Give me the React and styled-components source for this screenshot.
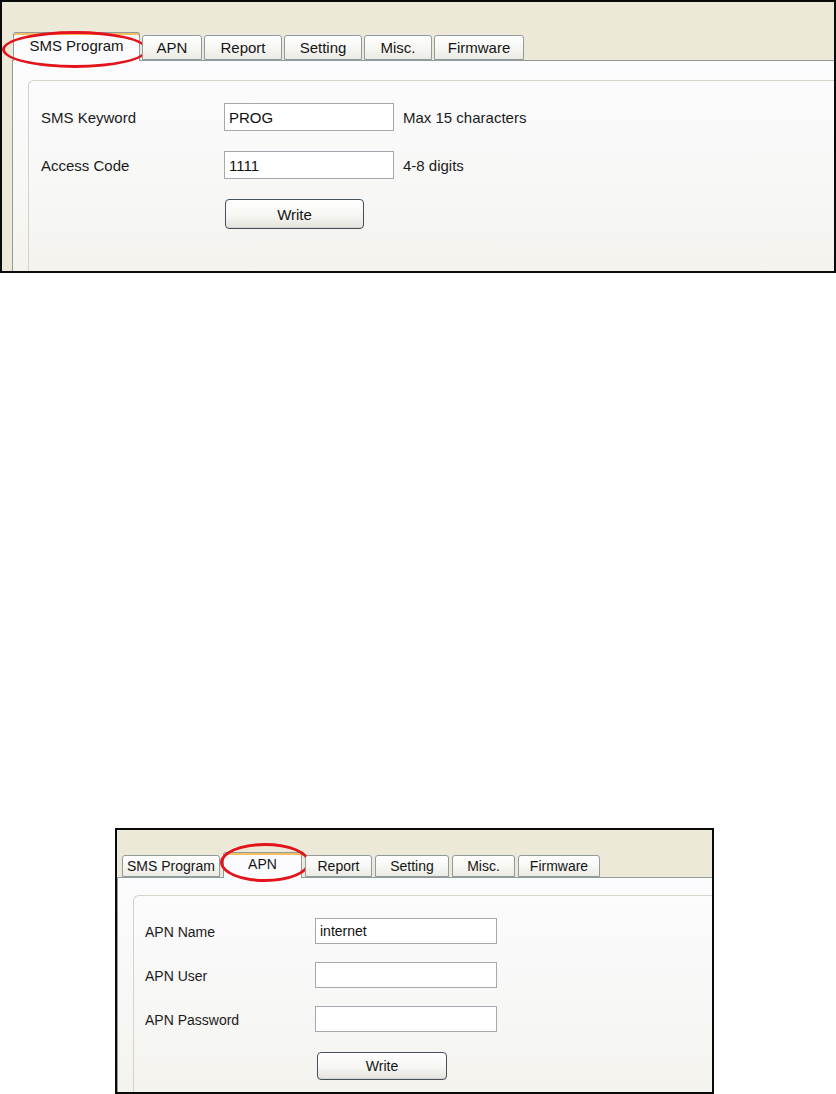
import React from "react";
import styled, { createGlobalStyle, ThemeProvider } from "styled-components";

const GlobalStyle = createGlobalStyle`
  html, body { margin: 0; padding: 0; background: #ffffff; }
  body { font-family: "Liberation Sans", Arial, sans-serif; color: #1b1b1b; }
  * { box-sizing: border-box; }
`;

const Page = styled.div`
  width: 836px;
  height: 1094px;
  display: flex;
  flex-direction: column;
`;

const Frame = styled.div`
  margin-left: ${(p) => p.theme.frameML}px;
  margin-top: ${(p) => p.theme.frameMT}px;
  width: ${(p) => p.theme.frameW}px;
  height: ${(p) => p.theme.frameH}px;
  border: 2px solid #0a0a0a;
  background: #ece9d8;
  overflow: hidden;
  display: flex;
  flex-direction: column;
  font-size: ${(p) => p.theme.font}px;
`;

const TabStrip = styled.div`
  height: ${(p) => p.theme.stripH}px;
  flex: none;
  display: flex;
  align-items: flex-end;
  gap: ${(p) => p.theme.tabGap}px;
  padding-left: ${(p) => p.theme.tabPL}px;
  position: relative;
  z-index: 2;
`;

const Tab = styled.div`
  position: relative;
  flex: none;
  width: ${(p) => p.$w}px;
  height: ${(p) => (p.$active ? p.theme.selTabH + 1 : p.theme.tabH)}px;
  margin-bottom: ${(p) => (p.$active ? -1 : 0)}px;
  border: 1px solid #919b9c;
  border-bottom: ${(p) => (p.$active ? "none" : "1px solid #919b9c")};
  border-radius: 3px 3px 0 0;
  background: ${(p) =>
    p.$active
      ? "linear-gradient(#fffaf0 0, #fcfcfe 4px, #fcfcfe 100%)"
      : "linear-gradient(#ffffff 0%, #f7f7f4 50%, #ebeae4 100%)"};
  box-shadow: ${(p) => (p.$active ? "inset 0 2px 0 #f5c064" : "none")};
  display: flex;
  align-items: ${(p) => (p.$active ? "flex-start" : "center")};
  padding-top: ${(p) => (p.$active ? p.theme.selTextPT : 0)}px;
  justify-content: center;
  color: #151515;
  white-space: nowrap;
`;

const Circle = styled.span`
  position: absolute;
  left: ${(p) => p.theme.ring.l}px;
  top: ${(p) => p.theme.ring.t}px;
  width: ${(p) => p.theme.ring.w}px;
  height: ${(p) => p.theme.ring.h}px;
  border: 3px solid #e3121b;
  border-radius: 50%;
  pointer-events: none;
`;

const Panel = styled.div`
  flex: 1;
  margin-left: ${(p) => p.theme.panelML}px;
  border-top: 1px solid #919b9c;
  border-left: 1px solid #919b9c;
  background: linear-gradient(#fcfcfe 0%, #f8f8f7 50%, #f4f3ee 100%);
  padding-left: ${(p) => p.theme.groupML}px;
  padding-top: ${(p) => p.theme.groupMT}px;
  display: flex;
  flex-direction: column;
`;

const GroupBox = styled.div`
  flex: 1;
  border-top: 1px solid #d5d3c8;
  border-left: 1px solid #d5d3c8;
  border-radius: 6px 0 0 0;
  padding-left: ${(p) => p.theme.groupPL}px;
  padding-top: ${(p) => p.theme.groupPT}px;
  display: flex;
  flex-direction: column;
  gap: ${(p) => p.theme.btnGap}px;
`;

const FormGrid = styled.div`
  display: grid;
  grid-template-columns: ${(p) => p.theme.labelW}px ${(p) => p.theme.inputW}px auto;
  row-gap: ${(p) => p.theme.rowGap}px;
  align-items: center;
  justify-content: start;
`;

const Label = styled.label`
  color: #1b1b1b;
  margin-top: 1px;
`;

const Field = styled.div`
  height: ${(p) => p.theme.inputH}px;
  border: 1px solid #a3a9ae;
  background: #ffffff;
  padding-left: 4px;
  display: flex;
  align-items: center;
  color: #111;
`;

const Hint = styled.span`
  color: #1b1b1b;
  padding-left: ${(p) => p.theme.hintGap}px;
`;

const WriteButton = styled.button`
  margin-left: ${(p) => p.theme.labelW + p.theme.btnML}px;
  width: ${(p) => p.theme.btnW}px;
  height: ${(p) => p.theme.btnH}px;
  font: inherit;
  color: #151515;
  border: 1px solid #44505c;
  border-radius: 4px;
  background: linear-gradient(#ffffff 0%, #f6f6f3 55%, #e4e3dc 100%);
  box-shadow: inset 0 -1px 0 #d6d4cb;
  padding: 0;
`;

const theme1 = {
  frameML: 0, frameMT: 0, frameW: 836, frameH: 273, font: 15,
  stripH: 58, tabPL: 11, tabGap: 2, tabH: 25, selTabH: 28, selTextPT: 4,
  panelML: 10, groupML: 15, groupMT: 19, groupPL: 12, groupPT: 22,
  labelW: 183, inputW: 170, inputH: 28, rowGap: 20, hintGap: 9,
  btnGap: 20, btnW: 139, btnH: 30, btnML: 1,
  ring: { l: -12, t: -2, w: 146, h: 37 },
};

const theme2 = {
  frameML: 115, frameMT: 555, frameW: 599, frameH: 266, font: 14,
  stripH: 47, tabPL: 5, tabGap: 3, tabH: 22, selTabH: 25, selTextPT: 3,
  panelML: 0, groupML: 15, groupMT: 17, groupPL: 11, groupPT: 22,
  labelW: 170, inputW: 182, inputH: 26, rowGap: 18, hintGap: 9,
  btnGap: 20, btnW: 130, btnH: 28, btnML: 2,
  ring: { l: -4, t: -10, w: 90, h: 39 },
};

const tabNames = ["SMS Program", "APN", "Report", "Setting", "Misc.", "Firmware"];

function ConfigWindow({ theme, widths, active, rows, hints }) {
  return (
    <ThemeProvider theme={theme}>
      <Frame>
        <TabStrip>
          {tabNames.map((name, i) => (
            <Tab key={name} $w={widths[i]} $active={i === active}>
              {name}
              {i === active && <Circle />}
            </Tab>
          ))}
        </TabStrip>
        <Panel>
          <GroupBox>
            <FormGrid>
              {rows.map(([label, value], i) => (
                <React.Fragment key={label}>
                  <Label>{label}</Label>
                  <Field>{value}</Field>
                  <Hint>{hints ? hints[i] : ""}</Hint>
                </React.Fragment>
              ))}
            </FormGrid>
            <div>
              <WriteButton>Write</WriteButton>
            </div>
          </GroupBox>
        </Panel>
      </Frame>
    </ThemeProvider>
  );
}

export default function App() {
  return (
    <>
      <GlobalStyle />
      <Page>
        <ConfigWindow
          theme={theme1}
          widths={[127, 60, 78, 78, 68, 90]}
          active={0}
          rows={[
            ["SMS Keyword", "PROG"],
            ["Access Code", "1111"],
          ]}
          hints={["Max 15 characters", "4-8 digits"]}
        />
        <ConfigWindow
          theme={theme2}
          widths={[98, 79, 67, 74, 63, 82]}
          active={1}
          rows={[
            ["APN Name", "internet"],
            ["APN User", ""],
            ["APN Password", ""],
          ]}
        />
      </Page>
    </>
  );
}
